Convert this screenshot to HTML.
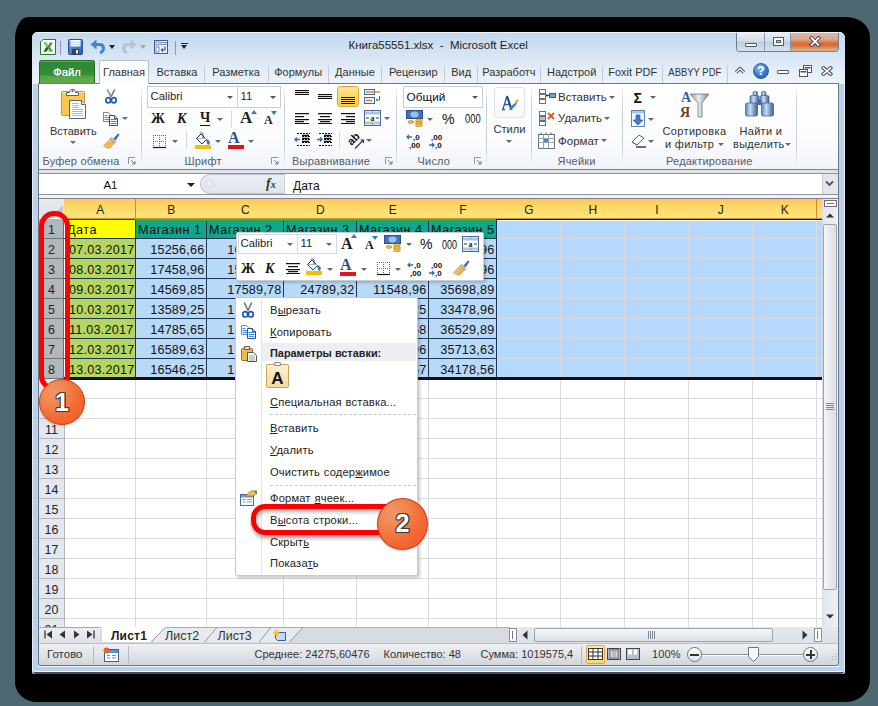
<!DOCTYPE html>
<html><head><meta charset="utf-8">
<style>
*{box-sizing:border-box;margin:0;padding:0}
html,body{width:878px;height:706px;overflow:hidden;background:#4d6870;font-family:"Liberation Sans",sans-serif;}
.a{position:absolute}
#shadow{left:15px;top:17px;width:855px;height:685px;background:#000;border-radius:13px 24px 24px 22px / 22px 20px 22px 20px}
#win{left:32px;top:32px;width:813px;height:642px;background:#b9d1ea;border-radius:6px 6px 3px 3px;overflow:hidden;box-shadow:inset 1px 0 0 #e4eef9, inset -1px 0 0 #e4eef9, inset 0 -2px 0 #4a4f55, inset 0 -3px 0 #f2f7fc}
#title{left:0;top:0;width:813px;height:52px;background:linear-gradient(#c3d8ee 0,#d6e4f3 22px,#e6eef8 40px,#edf3fa 52px)}
.t{position:absolute;white-space:pre;color:#222;font-size:11px;line-height:13px}
.tab{position:absolute;top:28px;height:23px;font-size:11px;color:#333;text-align:center;line-height:22px;border-right:1px solid #c5cdd8}
#ribbon{left:6px;top:51px;width:801px;height:85px;background:linear-gradient(#fdfeff 0,#f8fafd 50px,#eef2f8 85px);border:1px solid #b9c3cf;border-top:1px solid #b6bec8}
.gl{position:absolute;top:71px;font-size:11px;color:#515d6c;white-space:pre;line-height:13px;letter-spacing:0.2px}
.gsep{position:absolute;top:4px;width:1px;height:80px;background:linear-gradient(rgba(200,208,218,0),#c7cfd9 20%,#c7cfd9 80%,rgba(200,208,218,0))}
.arr{position:absolute;width:0;height:0;border-left:3px solid transparent;border-right:3px solid transparent;border-top:3px solid #555}
.cell{font-size:12.6px;line-height:15px;color:#111;overflow:hidden}
.mi{left:270px;font-size:11.2px;line-height:13px;color:#222;word-spacing:0.6px;letter-spacing:0.15px}
.mi u{text-decoration:underline;text-underline-offset:1px}
.ball{border-radius:50%;background:radial-gradient(circle at 30% 28%,#f09866 0,#f1864f 28%,#f36a34 58%,#f4561f 100%);border:1px solid #c23c16;box-shadow:0 1px 2px rgba(0,0,0,0.2)}
.num{text-align:center;font:bold 25px/25px 'Liberation Sans';color:#fff;text-shadow:1px 0 0 #3a3a3a,-1px 0 0 #3a3a3a,0 1px 0 #3a3a3a,0 -1px 0 #3a3a3a,1px 1px 0 #3a3a3a,-1px -1px 0 #3a3a3a,1px -1px 0 #3a3a3a,-1px 1px 0 #3a3a3a}
</style></head><body>
<div class="a" id="shadow"></div>
<div class="a" id="win">
  <div class="a" id="title"></div>
  <div class="a" style="left:0;top:0;width:813px;height:1px;background:#eef4fa"></div>
  <!-- QAT -->
  <svg class="a" style="left:8px;top:7px" width="16" height="16" viewBox="0 0 16 16">
    <path d="M3 0.5h12.5v15H0.5V3z" fill="#fff" stroke="#1f7a2a"/>
    <path d="M3 3h2.5l5 10H8z" fill="#d8dcd8"/>
    <path d="M3.5 3.5h3l1.7 3 1.7-3h3L10 8l3 4.5h-3L8.2 9.5 6.5 12.5h-3L6.5 8z" fill="#3c9c40"/>
    <path d="M3.5 3.5h3l1.7 3L6.8 8.5z" fill="#8ad070"/>
    <path d="M3.5 12.5L6.5 8l1.7 1.5-1.7 3z" fill="#1f6a28"/>
  </svg>
  <div class="a" style="left:28px;top:9px;width:1px;height:14px;background:#8e9aa8"></div>
  <svg class="a" style="left:36px;top:7px" width="15" height="16" viewBox="0 0 15 16">
    <defs><linearGradient id="sv" x1="0" y1="0" x2="1" y2="1"><stop offset="0" stop-color="#6fa0e0"/><stop offset="1" stop-color="#2a5cb0"/></linearGradient></defs>
    <rect x="0.5" y="0.5" width="14" height="15" rx="1" fill="url(#sv)" stroke="#284f96"/>
    <rect x="2.5" y="1" width="10" height="6.5" fill="#f4f7fb"/>
    <path d="M3 3.5h9M3 5.5h9" stroke="#c9d6e8"/>
    <rect x="4" y="10" width="7" height="5.5" fill="#39414c"/>
    <rect x="8" y="11" width="2" height="3.5" fill="#e8ecf0"/>
  </svg>
  <svg class="a" style="left:58px;top:7px" width="16" height="16" viewBox="0 0 16 16">
    <path d="M5 5.5h4.5c2.5 0 4 1.6 4 3.8 0 2.3-1.6 3.8-3.5 4.7" stroke="#3b86d8" stroke-width="3" fill="none"/>
    <path d="M0.5 5.5L6.5 0.5V10.5z" fill="#3b86d8"/>
  </svg>
  <div class="arr" style="left:77px;top:13px;border-top-color:#222;border-left-width:3.5px;border-right-width:3.5px;border-top-width:4px"></div>
  <svg class="a" style="left:89px;top:7px" width="16" height="16" viewBox="0 0 16 16">
    <path d="M11 5.5H6.5c-2.5 0-4 1.6-4 3.8 0 2.3 1.6 3.8 3.5 4.7" stroke="#bcc3cb" stroke-width="3" fill="none"/>
    <path d="M15.5 5.5L9.5 0.5V10.5z" fill="#bcc3cb"/>
  </svg>
  <div class="arr" style="left:108px;top:13px;border-top-color:#a0a8b2;border-left-width:3.5px;border-right-width:3.5px;border-top-width:4px"></div>
  <svg class="a" style="left:122px;top:8px" width="14" height="14" viewBox="0 0 14 14">
    <rect x="0.5" y="0.5" width="13" height="13" fill="#eef2f7" stroke="#41618c"/>
    <rect x="2" y="2" width="3" height="3" fill="#fff" stroke="#4a78b8" stroke-width="0.8"/>
    <rect x="7" y="2.5" width="5" height="2" fill="#fff" stroke="#4a78b8" stroke-width="0.8"/>
    <rect x="2" y="7" width="3" height="5" fill="#fff" stroke="#4a78b8" stroke-width="0.8"/>
    <path d="M11 6.5v3.5H7.5M9 8.5l-1.5 1.5L9 11.5" stroke="#2a5da8" fill="none" stroke-width="1.2"/>
  </svg>
  <div class="a" style="left:143px;top:9px;width:1px;height:14px;background:#8e9aa8"></div>
  <div class="a" style="left:149px;top:11px;width:7px;height:1px;background:#222"></div>
  <div class="arr" style="left:149px;top:13px;border-top-color:#222;border-left-width:3.5px;border-right-width:3.5px;border-top-width:4px"></div>
  <div class="t" style="left:316.5px;top:6.5px;font-size:11.5px;color:#1e1e1e">Книга55551.xlsx  -  Microsoft Excel</div>
  <!-- window buttons -->
  <div class="a" style="left:704px;top:1px;width:103px;height:19px;border:1px solid #6f7f92;border-top:none;border-radius:0 0 4px 4px;overflow:hidden">
    <div class="a" style="left:0;top:0;width:28px;height:18px;background:linear-gradient(#e7eef7,#d3deeb 45%,#bfcedf 50%,#d5e2ef);border-right:1px solid #8a99aa"></div>
    <div class="a" style="left:28px;top:0;width:26px;height:18px;background:linear-gradient(#e7eef7,#d3deeb 45%,#bfcedf 50%,#d5e2ef);border-right:1px solid #8a99aa"></div>
    <div class="a" style="left:54px;top:0;width:48px;height:18px;background:linear-gradient(#dcb8a0,#d6ab8e 35%,#d68f62 45%,#e0632e 60%,#dc7a44 75%,#d4a486 90%,#d8ac90)"></div>
    <div class="a" style="left:8px;top:10px;width:12px;height:4px;background:#fff;border:1px solid #4a5a6e;border-radius:1px"></div>
    <div class="a" style="left:36px;top:4px;width:11px;height:9px;background:transparent;border:1px solid #4a5a6e;box-shadow:inset 0 0 0 2px #fff, inset 0 0 0 3px #4a5a6e"></div>
    <svg class="a" style="left:72px;top:3px" width="12" height="11" viewBox="0 0 12 11"><path d="M2.5 2l7 7M9.5 2l-7 7" stroke="#3a3a4a" stroke-width="3.6" stroke-linecap="square"/><path d="M2.5 2l7 7M9.5 2l-7 7" stroke="#fff" stroke-width="1.8" stroke-linecap="square"/></svg>
  </div>
  <!-- tabs -->
  <div class="a" style="left:7px;top:28px;width:56px;height:23px;background:linear-gradient(#2f8834 0,#2f8a35 40%,#34903a 62%,#5aa448 72%,#62aa4e 100%);border:1px solid #236d27;border-bottom:none;border-radius:3px 3px 0 0;box-shadow:inset 0 1px 0 #5cae50"></div>
  <div class="t" style="left:7px;top:33.5px;width:56px;text-align:center;color:#fff;font-size:11.2px;font-weight:normal;text-shadow:0 0 0.4px #fff">Файл</div>
  <div class="a" style="left:67px;top:28px;width:50px;height:24px;background:linear-gradient(#fff,#fbfcfe);border:1px solid #b6bec8;border-bottom:none;border-radius:2px 2px 0 0;z-index:2"></div>
  <div class="t" style="left:67px;top:34px;width:50px;text-align:center;color:#333;z-index:3">Главная</div>
  <div class="t" style="left:118.4px;top:34px;width:53.2px;text-align:center;color:#333;overflow:hidden">Вставка</div>
  <div class="a" style="left:172px;top:31px;width:1px;height:20px;background:linear-gradient(rgba(190,198,210,0),#c3cad4 30%)"></div>
  <div class="t" style="left:172.6px;top:34px;width:62.9px;text-align:center;color:#333;overflow:hidden">Разметка</div>
  <div class="a" style="left:236px;top:31px;width:1px;height:20px;background:linear-gradient(rgba(190,198,210,0),#c3cad4 30%)"></div>
  <div class="t" style="left:236.5px;top:34px;width:59.3px;text-align:center;color:#333;overflow:hidden">Формулы</div>
  <div class="a" style="left:296px;top:31px;width:1px;height:20px;background:linear-gradient(rgba(190,198,210,0),#c3cad4 30%)"></div>
  <div class="t" style="left:296.8px;top:34px;width:52.3px;text-align:center;color:#333;overflow:hidden">Данные</div>
  <div class="a" style="left:349px;top:31px;width:1px;height:20px;background:linear-gradient(rgba(190,198,210,0),#c3cad4 30%)"></div>
  <div class="t" style="left:350.1px;top:34px;width:62.4px;text-align:center;color:#333;overflow:hidden">Рецензир</div>
  <div class="a" style="left:412px;top:31px;width:1px;height:20px;background:linear-gradient(rgba(190,198,210,0),#c3cad4 30%)"></div>
  <div class="t" style="left:413.5px;top:34px;width:31.3px;text-align:center;color:#333;overflow:hidden">Вид</div>
  <div class="a" style="left:445px;top:31px;width:1px;height:20px;background:linear-gradient(rgba(190,198,210,0),#c3cad4 30%)"></div>
  <div class="t" style="left:445.8px;top:34px;width:62.3px;text-align:center;color:#333;overflow:hidden">Разработч</div>
  <div class="a" style="left:508px;top:31px;width:1px;height:20px;background:linear-gradient(rgba(190,198,210,0),#c3cad4 30%)"></div>
  <div class="t" style="left:509.1px;top:34px;width:61.1px;text-align:center;color:#333;overflow:hidden">Надстрой</div>
  <div class="a" style="left:570px;top:31px;width:1px;height:20px;background:linear-gradient(rgba(190,198,210,0),#c3cad4 30%)"></div>
  <div class="t" style="left:571.2px;top:34px;width:59.0px;text-align:center;color:#333;overflow:hidden">Foxit PDF</div>
  <div class="a" style="left:630px;top:31px;width:1px;height:20px;background:linear-gradient(rgba(190,198,210,0),#c3cad4 30%)"></div>
  <div class="t" style="left:631.2px;top:34px;width:63.6px;text-align:center;color:#333;overflow:hidden;transform:scaleX(0.86)">ABBYY PDF</div>
  <div class="a" style="left:695px;top:31px;width:1px;height:20px;background:linear-gradient(rgba(190,198,210,0),#c3cad4 30%)"></div>
  <!-- ribbon right icons -->
  <svg class="a" style="left:702px;top:34px" width="12" height="9" viewBox="0 0 12 9"><path d="M2 6.5L6 2.5l4 4" stroke="#555" stroke-width="3.2" fill="none" stroke-linejoin="round"/><path d="M2 6.5L6 2.5l4 4" stroke="#fff" stroke-width="1.2" fill="none"/></svg>
  <div class="a" style="left:721px;top:31px;width:16px;height:16px;border-radius:50%;background:radial-gradient(circle at 40% 30%,#8fc0f4,#2f74c9 60%,#1f5aa8);border:1px solid #2a5c9c"></div>
  <div class="t" style="left:721px;top:32px;width:16px;text-align:center;color:#fff;font-weight:bold;font-size:12px;line-height:14px">?</div>
  <div class="a" style="left:745px;top:38px;width:12px;height:4px;border:1px solid #555;border-radius:1px;background:#fff"></div>
  <svg class="a" style="left:767px;top:33px" width="13" height="12" viewBox="0 0 13 12"><rect x="4.5" y="0.5" width="8" height="7" fill="#fff" stroke="#555"/><rect x="5.5" y="2" width="6" height="1.5" fill="#555"/><rect x="0.5" y="4.5" width="8" height="7" fill="#fff" stroke="#555"/><rect x="1.5" y="6" width="6" height="1.5" fill="#555"/></svg>
  <svg class="a" style="left:789px;top:34px" width="12" height="10" viewBox="0 0 12 10"><path d="M2.5 2l7 6M9.5 2l-7 6" stroke="#555" stroke-width="3.8" stroke-linecap="square"/><path d="M2.5 2l7 6M9.5 2l-7 6" stroke="#fff" stroke-width="1.6" stroke-linecap="square"/></svg>
</div>
<div class="a" id="pg" style="left:0;top:0;width:878px;height:706px">
  <!-- ribbon body -->
  <div class="a" style="left:38px;top:83px;width:801px;height:87px;background:linear-gradient(#ffffff 0,#fbfcfe 55px,#eff3f8 86px);border:1px solid #737b86;border-top-color:#8a929c;border-bottom-color:#7d858f"></div>
  <div class="a" style="left:100px;top:83px;width:47px;height:1px;background:#fff"></div>
  <div class="a" style="left:38px;top:170px;width:801px;height:3px;background:#dfe3e8;border-left:1px solid #737b86;border-right:1px solid #737b86"></div>
  <!-- group separators -->
  <div class="gsep" style="left:141px;top:86px"></div>
  <div class="gsep" style="left:284px;top:86px"></div>
  <div class="gsep" style="left:396px;top:86px"></div>
  <div class="gsep" style="left:486px;top:86px"></div>
  <div class="gsep" style="left:531px;top:86px"></div>
  <div class="gsep" style="left:622px;top:86px"></div>
  <div class="gsep" style="left:796px;top:86px"></div>
  <!-- group labels -->
  <div class="gl" style="left:42.5px;top:154.9px">Буфер обмена</div>
  <div class="gl" style="left:184.5px;top:154.9px">Шрифт</div>
  <div class="gl" style="left:292px;top:154.9px">Выравнивание</div>
  <div class="gl" style="left:417.5px;top:154.9px">Число</div>
  <div class="gl" style="left:557.5px;top:154.9px">Ячейки</div>
  <div class="gl" style="left:666px;top:154.9px">Редактирование</div>
  <!-- launchers -->
  <svg class="a" style="left:128px;top:157px" width="8" height="8" viewBox="0 0 8 8"><path d="M0.5 7V0.5H7" stroke="#8a96a4" fill="none"/><path d="M3 3l4 4M7 4v3H4" stroke="#6e7a88" fill="none"/></svg>
  <svg class="a" style="left:271px;top:157px" width="8" height="8" viewBox="0 0 8 8"><path d="M0.5 7V0.5H7" stroke="#8a96a4" fill="none"/><path d="M3 3l4 4M7 4v3H4" stroke="#6e7a88" fill="none"/></svg>
  <svg class="a" style="left:385px;top:157px" width="8" height="8" viewBox="0 0 8 8"><path d="M0.5 7V0.5H7" stroke="#8a96a4" fill="none"/><path d="M3 3l4 4M7 4v3H4" stroke="#6e7a88" fill="none"/></svg>
  <svg class="a" style="left:474px;top:157px" width="8" height="8" viewBox="0 0 8 8"><path d="M0.5 7V0.5H7" stroke="#8a96a4" fill="none"/><path d="M3 3l4 4M7 4v3H4" stroke="#6e7a88" fill="none"/></svg>

  <!-- Clipboard -->
  <svg class="a" style="left:60px;top:88px" width="29" height="32" viewBox="0 0 29 32">
    <rect x="1.5" y="3.5" width="23" height="24" rx="1" fill="#fbc84c" stroke="#c8925a"/>
    <path d="M2.5 4.5h21" stroke="#ffe9a8"/>
    <path d="M6.5 7.5V4.5h3c0-2 1.2-3 2.5-3h1c1.3 0 2.5 1 2.5 3h3v3z" fill="#fff" stroke="#5a626c"/>
    <circle cx="12.5" cy="3.2" r="0.9" fill="#8a2a3a"/>
    <path d="M9.5 12.5h12l4 4v14h-16z" fill="#fff" stroke="#5c6570"/>
    <path d="M21.5 12.5v4h4" fill="#e6eaee" stroke="#5c6570"/>
    <path d="M12 15.5h7M12 17.5h7M12 19.5h7M12 21.5h11M12 23.5h11M12 25.5h11M12 27.5h11" stroke="#b4bac2"/>
  </svg>
  <div class="t" style="left:50px;top:125.3px;color:#333">Вставить</div>
  <div class="arr" style="left:70px;top:141px;border-top-color:#6a6a6a"></div>
  <svg class="a" style="left:105px;top:89px" width="12" height="15" viewBox="0 0 12 15">
    <path d="M2.3 0.5L6.2 8.2M9.7 0.5L5.8 8.2" stroke="#6b7480" stroke-width="1.6"/>
    <path d="M2.3 0.5L6 7.5" stroke="#b9c0c8" stroke-width="0.6"/>
    <ellipse cx="3.2" cy="11.3" rx="2.4" ry="2.6" fill="#fff" stroke="#2257b8" stroke-width="1.7"/>
    <ellipse cx="8.8" cy="11.3" rx="2.4" ry="2.6" fill="#fff" stroke="#2257b8" stroke-width="1.7"/>
  </svg>
  <svg class="a" style="left:103px;top:112px" width="16" height="14" viewBox="0 0 16 14">
    <path d="M0.5 0.5h5l2 2v7h-7z" fill="#fff" stroke="#7d8a9c"/>
    <path d="M1.5 3.5h3M1.5 5.5h4.5M1.5 7.5h4.5" stroke="#3d8fe0"/>
    <path d="M6.5 3.5h5l3 3v7h-8z" fill="#fff" stroke="#2b4f9a"/>
    <path d="M11.5 3.5v3h3" fill="#dce8f8" stroke="#2b4f9a"/>
    <path d="M7.5 7.5h6M7.5 9.5h6M7.5 11.5h6" stroke="#3d8fe0"/>
  </svg>
  <div class="arr" style="left:122px;top:117px;border-top-color:#6a6a6a"></div>
  <svg class="a" style="left:102px;top:133px" width="18" height="16" viewBox="0 0 18 16">
    <path d="M12 5.5l3.8-4.3c.6-.6 1.6.2 1.1.9L13.4 7z" fill="#3a6fc0" stroke="#1f4a8a" stroke-width="0.6"/>
    <path d="M9.5 4.5l4.5 4-1.5 1.5-4.5-4z" fill="#c9ced6" stroke="#6b737e" stroke-width="0.6"/>
    <path d="M8 6l4.5 4-4 4.5c-1.8 1-4.5.6-7-1.8z" fill="#f4cf7c" stroke="#a87a2c" stroke-width="0.6"/>
    <path d="M4 12.5l5.5-4.3M6 14l5-4.5" stroke="#e8a43c" stroke-width="1.2"/>
  </svg>

  <!-- Font group -->
  <div class="a" style="left:147px;top:86px;width:91px;height:22px;background:#fff;border:1px solid #c5ced9"></div>
  <div class="a" style="left:237px;top:86px;width:44px;height:22px;background:#fff;border:1px solid #c5ced9"></div>
  <div class="t" style="left:150.5px;top:90.2px;color:#1e1e1e;font-size:11.3px">Calibri</div>
  <div class="t" style="left:240.5px;top:90.2px;color:#1e1e1e;font-size:11.3px">11</div>
  <div class="arr" style="left:227px;top:96px;border-top-color:#555"></div>
  <div class="arr" style="left:270px;top:96px;border-top-color:#555"></div>
  <div class="t" style="left:151px;top:111px;font:bold 14px/16px 'Liberation Serif';color:#1a1a1a">Ж</div>
  <div class="t" style="left:177px;top:111px;font:bold italic 14px/16px 'Liberation Serif';color:#1a1a1a">К</div>
  <div class="t" style="left:200px;top:110px;font:bold 14px/16px 'Liberation Serif';color:#1a1a1a">Ч</div>
  <div class="a" style="left:200px;top:125px;width:10px;height:1px;background:#1a1a1a"></div>
  <div class="arr" style="left:217px;top:118px;border-top-color:#666"></div>
  <div class="a" style="left:231px;top:110px;width:1px;height:18px;background:#d4dae2"></div>
  <div class="t" style="left:240px;top:109px;font:bold 17px/18px 'Liberation Serif';color:#222">A</div>
  <svg class="a" style="left:251px;top:110px" width="6" height="4"><path d="M0 4L3 0 6 4z" fill="#3a74c8"/></svg>
  <div class="t" style="left:264px;top:114px;font:bold 12px/13px 'Liberation Serif';color:#222">A</div>
  <svg class="a" style="left:271px;top:111px" width="6" height="4"><path d="M0 0L3 4 6 0z" fill="#3a74c8"/></svg>
  <svg class="a" style="left:152px;top:134px" width="15" height="15" viewBox="0 0 15 15">
    <path d="M1.5 1v12M7.5 1v12M13.5 1v12M1 1.5h13M1 7.5h13" stroke="#666" stroke-dasharray="1 1" fill="none"/>
    <path d="M1 13.5h13" stroke="#111" stroke-width="1.2"/>
  </svg>
  <div class="arr" style="left:172px;top:140px;border-top-color:#666"></div>
  <div class="a" style="left:186px;top:131px;width:1px;height:18px;background:#d4dae2"></div>
  <svg class="a" style="left:194px;top:132px" width="18" height="17" viewBox="0 0 18 17">
    <path d="M2.5 6.5L7 2l5.5 5.5L8 12z" fill="#fff" stroke="#2a3340" stroke-width="1"/>
    <path d="M3 6.5h9" stroke="#9fb8d8" stroke-width="1"/>
    <path d="M6 1.5c1-1.5 3-1 3 1.5v3" stroke="#2a3340" fill="none" stroke-width="0.9"/>
    <path d="M12.5 7.5c1.8.3 3 1.5 3 3.5 0 1-.6 1.5-1.2 1.5-.7 0-1.1-.6-1.1-1.5z" fill="#3a7ad0" stroke="#24509a" stroke-width="0.5"/>
    <rect x="1" y="13" width="16" height="4" fill="#f0c000"/>
  </svg>
  <div class="arr" style="left:215px;top:140px;border-top-color:#666"></div>
  <div class="t" style="left:228px;top:130px;font:bold 16px/16px 'Liberation Serif';color:#2a4e8a">A</div>
  <div class="a" style="left:228px;top:145px;width:16px;height:4px;background:#e8111a"></div>
  <div class="arr" style="left:248px;top:140px;border-top-color:#666"></div>
  <!-- Alignment -->
  <svg class="a" style="left:294px;top:89px" width="16" height="8" viewBox="0 0 16 8"><path d="M1 1.5h14M1 3.5h14M1 5.5h14" stroke="#111"/><path d="M1 2.5h14M1 4.5h14" stroke="#d8dadd"/></svg>
  <svg class="a" style="left:317px;top:93px" width="16" height="8" viewBox="0 0 16 8"><path d="M1 1.5h14M1 3.5h14M1 5.5h14" stroke="#111"/><path d="M1 2.5h14M1 4.5h14" stroke="#d8dadd"/></svg>
  <div class="a" style="left:337px;top:86px;width:22px;height:21px;border:1px solid #e5a33b;border-radius:3px;background:linear-gradient(#fde89a,#fbd96a 50%,#f9cf55)"></div>
  <svg class="a" style="left:340px;top:96px" width="16" height="9" viewBox="0 0 16 9"><path d="M1 1.5h14M1 3.5h14M1 5.5h14M1 7.5h14" stroke="#111"/></svg>
  <svg class="a" style="left:364px;top:89px" width="18" height="16" viewBox="0 0 18 16">
    <rect x="0.5" y="0.5" width="10" height="5" fill="#e8eef6" stroke="#4d6a94"/>
    <path d="M2 3h14" stroke="#c07a2a" stroke-width="1.2"/>
    <rect x="0.5" y="8.5" width="10" height="6" fill="#e8eef6" stroke="#4d6a94"/>
    <path d="M2 11.5h6" stroke="#c07a2a" stroke-width="1.2"/>
    <path d="M15.5 7v4h-3M13 9.5l-1 1.5 1.5.5" stroke="#4d6a94" fill="none"/>
  </svg>
  <svg class="a" style="left:294px;top:112px" width="16" height="13" viewBox="0 0 16 13"><path d="M1 1.5h14M1 7.5h14M1 11.5h14" stroke="#111"/><path d="M1 4.5h9M1 9.5h9" stroke="#111"/><path d="M1 2.5h14M1 5.5h9M1 8.5h14M1 10.5h9" stroke="#c8cacd"/></svg>
  <svg class="a" style="left:317px;top:112px" width="16" height="13" viewBox="0 0 16 13"><path d="M1 1.5h14M1 7.5h14M1 11.5h14" stroke="#111"/><path d="M3 4.5h10M3 9.5h10" stroke="#111"/><path d="M1 2.5h14M3 5.5h10M1 8.5h14M3 10.5h10" stroke="#c8cacd"/></svg>
  <svg class="a" style="left:340px;top:112px" width="16" height="13" viewBox="0 0 16 13"><path d="M1 1.5h14M1 7.5h14M1 11.5h14" stroke="#111"/><path d="M6 4.5h9M6 9.5h9" stroke="#111"/><path d="M1 2.5h14M6 5.5h9M1 8.5h14M6 10.5h9" stroke="#c8cacd"/></svg>
  <svg class="a" style="left:364px;top:110px" width="18" height="17" viewBox="0 0 18 17">
    <rect x="0.5" y="0.5" width="16" height="15" fill="#d7e4f4" stroke="#4d6a94"/>
    <rect x="1" y="5" width="15" height="6" fill="#fff"/>
    <path d="M1 3h15M1 13h15M8.5 1v3M8.5 12v3" stroke="#8aa6cc"/>
    <text x="8.5" y="10.5" font-family="Liberation Serif" font-weight="bold" font-size="8" text-anchor="middle" fill="#222">a</text>
    <path d="M2 8h3M12 8h3" stroke="#333"/>
  </svg>
  <div class="arr" style="left:384px;top:117px;border-top-color:#666"></div>
  <svg class="a" style="left:293px;top:132px" width="18" height="15" viewBox="0 0 18 15"><path d="M4 1.5h13M9 4.5h8M9 7.5h8M9 10.5h8M4 13.5h13" stroke="#111" stroke-dasharray="2 1"/><path d="M9 3.5h7M9 6.5h7M9 9.5h7" stroke="#111" stroke-width="1.5"/><path d="M7 7.5H2M4 5.5L2 7.5l2 2" stroke="#2f6cc0" stroke-width="1.5" fill="none"/></svg>
  <svg class="a" style="left:315px;top:132px" width="18" height="15" viewBox="0 0 18 15"><path d="M4 1.5h13M9 4.5h8M9 7.5h8M9 10.5h8M4 13.5h13" stroke="#111" stroke-dasharray="2 1"/><path d="M9 3.5h7M9 6.5h7M9 9.5h7" stroke="#111" stroke-width="1.5"/><path d="M2 7.5h5M5 5.5l2 2-2 2" stroke="#2f6cc0" stroke-width="1.5" fill="none"/></svg>
  <div class="a" style="left:339px;top:131px;width:1px;height:18px;background:#d4dae2"></div>
  <svg class="a" style="left:348px;top:131px" width="18" height="18" viewBox="0 0 18 18">
    <text x="3.5" y="15" font-family="Liberation Sans" font-weight="bold" font-size="11" fill="#111" transform="rotate(-45 3.5 15)">ab</text>
    <path d="M7 17.5L15.5 9M12.5 9h3v3" stroke="#333" fill="none" stroke-width="1.1"/>
  </svg>
  <div class="arr" style="left:366px;top:139px;border-top-color:#666"></div>

  <!-- Number -->
  <div class="a" style="left:403px;top:86px;width:80px;height:22px;background:#fff;border:1px solid #c5ced9"></div>
  <div class="t" style="left:406.5px;top:90px;color:#111;font-size:11.8px;line-height:14px">Общий</div>
  <div class="arr" style="left:472px;top:96px;border-top-color:#555"></div>
  <svg class="a" style="left:406px;top:110px" width="18" height="17" viewBox="0 0 18 17">
    <rect x="0.5" y="0.5" width="16" height="8" fill="#3f73bf" stroke="#2b4f8a"/>
    <ellipse cx="8.5" cy="4.5" rx="4" ry="3" fill="#9cc0ea"/>
    <ellipse cx="13" cy="10.5" rx="3.5" ry="1.6" fill="#f2c14a" stroke="#b07a1a" stroke-width="0.6"/>
    <ellipse cx="13" cy="13" rx="3.5" ry="1.6" fill="#f2c14a" stroke="#b07a1a" stroke-width="0.6"/>
    <ellipse cx="13" cy="15.3" rx="3.5" ry="1.5" fill="#f2c14a" stroke="#b07a1a" stroke-width="0.6"/>
    <ellipse cx="5" cy="12" rx="3" ry="1.4" fill="#f2c14a" stroke="#b07a1a" stroke-width="0.6"/>
  </svg>
  <div class="arr" style="left:427px;top:118px;border-top-color:#666"></div>
  <div class="t" style="left:442px;top:112px;font-size:14px;line-height:15px;color:#111">%</div>
  <div class="t" style="left:464.5px;top:112px;font-size:13px;line-height:14px;color:#111;transform:scaleX(0.72);transform-origin:left">000</div>
  <svg class="a" style="left:406px;top:132px" width="18" height="18" viewBox="0 0 18 18">
    <path d="M1 5h5M3 3L1 5l2 2" stroke="#2f6cc0" stroke-width="1.3" fill="none"/>
    <text x="7" y="8" font-family="Liberation Sans" font-weight="bold" font-size="8" fill="#111">,0</text>
    <text x="3" y="16" font-family="Liberation Sans" font-weight="bold" font-size="8" fill="#111">,00</text>
  </svg>
  <svg class="a" style="left:428px;top:132px" width="18" height="18" viewBox="0 0 18 18">
    <text x="3" y="8" font-family="Liberation Sans" font-weight="bold" font-size="8" fill="#111">,00</text>
    <path d="M1 13h5M4 11l2 2-2 2" stroke="#2f6cc0" stroke-width="1.3" fill="none"/>
    <text x="7" y="16" font-family="Liberation Sans" font-weight="bold" font-size="8" fill="#111">,0</text>
  </svg>

  <!-- Styles -->
  <div class="a" style="left:494px;top:87px;width:31px;height:31px;border:1px solid #dde2e8;border-radius:3px;background:linear-gradient(#fff,#f6f8fb)"></div>
  <svg class="a" style="left:501px;top:94px" width="18" height="17" viewBox="0 0 18 17">
    <path d="M1 15.5h3M6 2L1.8 15.5M6 2l4.5 13.5M3.2 10.5h6" stroke="#2a5aa8" stroke-width="1.3" fill="none"/>
    <path d="M6 2l4.5 13.5" stroke="#1e4a90" stroke-width="2"/>
    <path d="M8.5 15.5c1-3 4-5.5 7-6.5-1 3-4 6-7 6.5z" fill="#4f8ad8" stroke="#2a5aa8" stroke-width="0.6"/>
    <path d="M14.5 8.5l2.5-2.5" stroke="#e0a020" stroke-width="2"/>
  </svg>
  <div class="t" style="left:493.5px;top:122.8px;color:#333;font-size:11.1px">Стили</div>
  <div class="arr" style="left:506px;top:140px;border-top-color:#666"></div>

  <!-- Cells -->
  <svg class="a" style="left:538px;top:89px" width="18" height="15" viewBox="0 0 18 15">
    <rect x="1.5" y="0.5" width="6" height="4" fill="#fff" stroke="#6a7480"/><rect x="1.5" y="5.5" width="6" height="4" fill="#fff" stroke="#6a7480"/><rect x="1.5" y="10.5" width="6" height="4" fill="#fff" stroke="#6a7480"/>
    <rect x="11.5" y="4.5" width="6" height="4" fill="#6fa3e0" stroke="#2f5c9c"/>
    <path d="M8 6.5h3M9.5 5.2L8 6.5l1.5 1.3" stroke="#333" fill="none"/>
  </svg>
  <div class="t" style="left:558px;top:91px;color:#333;font-size:11.5px">Вставить</div>
  <div class="arr" style="left:609px;top:96px;border-top-color:#666"></div>
  <svg class="a" style="left:538px;top:111px" width="18" height="15" viewBox="0 0 18 15">
    <rect x="1.5" y="0.5" width="6" height="4" fill="#fff" stroke="#6a7480"/><rect x="1.5" y="5.5" width="6" height="4" fill="#9cc4f0" stroke="#6a7480"/><rect x="1.5" y="10.5" width="6" height="4" fill="#fff" stroke="#6a7480"/>
    <path d="M10 2l6 6M16 2l-6 6" stroke="#e8561a" stroke-width="1.8"/>
  </svg>
  <div class="t" style="left:558px;top:111.8px;color:#333;font-size:11.5px">Удалить</div>
  <div class="arr" style="left:604px;top:117px;border-top-color:#666"></div>
  <svg class="a" style="left:538px;top:132px" width="18" height="17" viewBox="0 0 18 17">
    <rect x="0.5" y="2.5" width="16" height="14" fill="#fff" stroke="#6a7480"/>
    <path d="M0.5 6.5h16M0.5 10.5h16M5.5 2.5v14M10.5 2.5v14" stroke="#9aa2ac"/>
    <rect x="6" y="7" width="4" height="3" fill="#3f86d8"/>
    <path d="M3 0.5v2M8 0.5v2M13 0.5v2" stroke="#555"/>
  </svg>
  <div class="t" style="left:558px;top:134.8px;color:#333;font-size:11.5px">Формат</div>
  <div class="arr" style="left:601px;top:139px;border-top-color:#666"></div>

  <!-- Editing -->
  <div class="t" style="left:633.5px;top:89.5px;font:bold 14px/16px 'Liberation Sans';color:#111">Σ</div>
  <div class="arr" style="left:650px;top:96px;border-top-color:#666"></div>
  <svg class="a" style="left:631px;top:110px" width="15" height="17" viewBox="0 0 15 17"><rect x="0.5" y="0.5" width="13" height="16" fill="#f2f6fb" stroke="#5a86c0"/><rect x="1" y="1" width="12" height="2.5" fill="#a9c8ec"/><path d="M5 5h4v5h3l-5 5-5-5h3z" fill="#3a7fd6" stroke="#1f4f9a" stroke-width="0.6"/></svg>
  <div class="arr" style="left:648px;top:118px;border-top-color:#666"></div>
  <svg class="a" style="left:631px;top:134px" width="16" height="14" viewBox="0 0 16 14"><path d="M1 8l7-7 5 3-7 7z" fill="#fff" stroke="#666"/><path d="M1 8l5 3" stroke="#666"/><path d="M5 13h10" stroke="#111" stroke-width="1.2"/></svg>
  <div class="arr" style="left:648px;top:140px;border-top-color:#666"></div>
  <svg class="a" style="left:680px;top:89px" width="30" height="30" viewBox="0 0 30 30">
    <defs><linearGradient id="fun" x1="0" x2="1"><stop offset="0" stop-color="#8e969e"/><stop offset="0.45" stop-color="#e8ecef"/><stop offset="1" stop-color="#7e8790"/></linearGradient></defs>
    <text x="1" y="13" font-family="Liberation Serif" font-weight="bold" font-size="14" fill="#2f62b0">A</text>
    <text x="0" y="28" font-family="Liberation Serif" font-weight="bold" font-size="14" fill="#7a3a2a">Я</text>
    <path d="M10 5h19l-7 9v14h-4V14z" fill="url(#fun)" stroke="#6f7880" stroke-width="0.8"/>
  </svg>
  <div class="t" style="left:662.5px;top:124.5px;color:#333;letter-spacing:0.35px">Сортировка</div>
  <div class="t" style="left:665px;top:137.5px;color:#333;letter-spacing:0.3px">и фильтр</div>
  <div class="arr" style="left:718px;top:143px;border-top-color:#666"></div>
  <svg class="a" style="left:745px;top:91px" width="29" height="26" viewBox="0 0 29 26">
    <defs><linearGradient id="bin" x1="0" x2="1"><stop offset="0" stop-color="#5a82bc"/><stop offset="0.4" stop-color="#c8dcf4"/><stop offset="1" stop-color="#36609c"/></linearGradient></defs>
    <rect x="8" y="0.5" width="4.5" height="4" rx="1.5" fill="url(#bin)" stroke="#3a5a88" stroke-width="0.7"/>
    <rect x="16.5" y="0.5" width="4.5" height="4" rx="1.5" fill="url(#bin)" stroke="#3a5a88" stroke-width="0.7"/>
    <rect x="5" y="4.5" width="9" height="8" rx="1.5" fill="url(#bin)" stroke="#3a5a88" stroke-width="0.7"/>
    <rect x="15" y="4.5" width="9" height="8" rx="1.5" fill="url(#bin)" stroke="#3a5a88" stroke-width="0.7"/>
    <rect x="0.5" y="12" width="12" height="13" rx="1.5" fill="url(#bin)" stroke="#3a5a88" stroke-width="0.7"/>
    <rect x="16.5" y="12" width="12" height="13" rx="1.5" fill="url(#bin)" stroke="#3a5a88" stroke-width="0.7"/>
    <rect x="12.5" y="9" width="4" height="5" fill="#4a6a98"/>
  </svg>
  <div class="t" style="left:739.5px;top:124.5px;color:#333;letter-spacing:0.3px">Найти и</div>
  <div class="t" style="left:733px;top:137.5px;color:#333;letter-spacing:0.3px">выделить</div>
  <div class="arr" style="left:785px;top:143px;border-top-color:#666"></div>
<!--GRID START-->
<div class="a" style="left:38px;top:170px;width:801px;height:3px;background:#dfe3e8;border-left:1px solid #737b86;border-right:1px solid #737b86"></div>
<div class="a" style="left:38px;top:173px;width:801px;height:26px;background:#eef3f9;border-left:1px solid #737b86;border-right:1px solid #737b86"></div>
<div class="a" style="left:39px;top:173px;width:799px;height:22px;background:#fff;border-top:1px solid #8e969f;border-bottom:1px solid #8e969f"></div>
<div class="t" style="left:39px;top:178.5px;width:143px;text-align:center;color:#111;font-size:11.5px">A1</div>
<div class="arr" style="left:187px;top:183px;border-top-color:#222;border-left-width:4px;border-right-width:4px;border-top-width:4px"></div>
<div class="a" style="left:200px;top:174px;width:85px;height:20px;background:linear-gradient(#e9eef4,#dfe5ec);border:1px solid #b9c2cd;border-right:1px solid #c9d0d8;border-radius:10px 0 0 10px"></div>
<div class="a" style="left:205px;top:179px;width:9px;height:9px;border-radius:50%;background:radial-gradient(#f4f6f8,#c9d0d8)"></div>
<div class="t" style="left:266px;top:176px;font:bold italic 14px/16px 'Liberation Serif';color:#333">f<span style="font-size:10px">x</span></div>
<div class="t" style="left:293px;top:179px;color:#111;font-size:12px;line-height:14px">Дата</div>
<div class="a" style="left:822px;top:174px;width:16px;height:20px;background:#e3e6ea;border-left:1px solid #c6ccd3"></div>
<svg class="a" style="left:825px;top:180px" width="9" height="7" viewBox="0 0 9 7"><path d="M1 1.5l3.5 3.5 3.5-3.5" stroke="#555" stroke-width="1.8" fill="none"/></svg>
<div class="a" style="left:38px;top:198px;width:801px;height:1px;background:#8c7f8c"></div>
<div class="a" style="left:39px;top:199px;width:783px;height:428px;background:#fff;overflow:hidden">
<div class="a" style="left:457px;top:20px;width:326px;height:160px;background:#b4d9fc;"></div>
<div class="a" style="left:25px;top:39px;width:758px;height:1px;background:#d4d8dc;"></div>
<div class="a" style="left:25px;top:59px;width:758px;height:1px;background:#d4d8dc;"></div>
<div class="a" style="left:25px;top:79px;width:758px;height:1px;background:#d4d8dc;"></div>
<div class="a" style="left:25px;top:99px;width:758px;height:1px;background:#d4d8dc;"></div>
<div class="a" style="left:25px;top:119px;width:758px;height:1px;background:#d4d8dc;"></div>
<div class="a" style="left:25px;top:139px;width:758px;height:1px;background:#d4d8dc;"></div>
<div class="a" style="left:25px;top:159px;width:758px;height:1px;background:#d4d8dc;"></div>
<div class="a" style="left:25px;top:179px;width:758px;height:1px;background:#d4d8dc;"></div>
<div class="a" style="left:25px;top:199px;width:758px;height:1px;background:#dadcdf;"></div>
<div class="a" style="left:25px;top:219px;width:758px;height:1px;background:#dadcdf;"></div>
<div class="a" style="left:25px;top:239px;width:758px;height:1px;background:#dadcdf;"></div>
<div class="a" style="left:25px;top:259px;width:758px;height:1px;background:#dadcdf;"></div>
<div class="a" style="left:25px;top:279px;width:758px;height:1px;background:#dadcdf;"></div>
<div class="a" style="left:25px;top:299px;width:758px;height:1px;background:#dadcdf;"></div>
<div class="a" style="left:25px;top:319px;width:758px;height:1px;background:#dadcdf;"></div>
<div class="a" style="left:25px;top:339px;width:758px;height:1px;background:#dadcdf;"></div>
<div class="a" style="left:25px;top:359px;width:758px;height:1px;background:#dadcdf;"></div>
<div class="a" style="left:25px;top:379px;width:758px;height:1px;background:#dadcdf;"></div>
<div class="a" style="left:25px;top:399px;width:758px;height:1px;background:#dadcdf;"></div>
<div class="a" style="left:25px;top:419px;width:758px;height:1px;background:#dadcdf;"></div>
<div class="a" style="left:25px;top:439px;width:758px;height:1px;background:#dadcdf;"></div>
<div class="a" style="left:96px;top:20px;width:1px;height:420px;background:#dadcdf;"></div>
<div class="a" style="left:167px;top:20px;width:1px;height:420px;background:#dadcdf;"></div>
<div class="a" style="left:244px;top:20px;width:1px;height:420px;background:#dadcdf;"></div>
<div class="a" style="left:317px;top:20px;width:1px;height:420px;background:#dadcdf;"></div>
<div class="a" style="left:389px;top:20px;width:1px;height:420px;background:#dadcdf;"></div>
<div class="a" style="left:457px;top:20px;width:1px;height:420px;background:#dadcdf;"></div>
<div class="a" style="left:521px;top:20px;width:1px;height:420px;background:#dadcdf;"></div>
<div class="a" style="left:585px;top:20px;width:1px;height:420px;background:#dadcdf;"></div>
<div class="a" style="left:649px;top:20px;width:1px;height:420px;background:#dadcdf;"></div>
<div class="a" style="left:713px;top:20px;width:1px;height:420px;background:#dadcdf;"></div>
<div class="a" style="left:777px;top:20px;width:1px;height:420px;background:#dadcdf;"></div>
<div class="a" style="left:26px;top:21px;width:70px;height:18px;background:#ffff00;"></div>
<div class="a" style="left:97px;top:21px;width:70px;height:18px;background:#13a68a;"></div>
<div class="a" style="left:168px;top:21px;width:76px;height:18px;background:#13a68a;"></div>
<div class="a" style="left:245px;top:21px;width:72px;height:18px;background:#13a68a;"></div>
<div class="a" style="left:318px;top:21px;width:71px;height:18px;background:#13a68a;"></div>
<div class="a" style="left:390px;top:21px;width:67px;height:18px;background:#13a68a;"></div>
<div class="a" style="left:26px;top:40px;width:70px;height:19px;background:#b6d662;"></div>
<div class="a" style="left:97px;top:40px;width:70px;height:19px;background:#b8d9f8;"></div>
<div class="a" style="left:168px;top:40px;width:76px;height:19px;background:#b8d9f8;"></div>
<div class="a" style="left:245px;top:40px;width:72px;height:19px;background:#b8d9f8;"></div>
<div class="a" style="left:318px;top:40px;width:71px;height:19px;background:#b8d9f8;"></div>
<div class="a" style="left:390px;top:40px;width:67px;height:19px;background:#b8d9f8;"></div>
<div class="a" style="left:26px;top:60px;width:70px;height:19px;background:#b6d662;"></div>
<div class="a" style="left:97px;top:60px;width:70px;height:19px;background:#b8d9f8;"></div>
<div class="a" style="left:168px;top:60px;width:76px;height:19px;background:#b8d9f8;"></div>
<div class="a" style="left:245px;top:60px;width:72px;height:19px;background:#b8d9f8;"></div>
<div class="a" style="left:318px;top:60px;width:71px;height:19px;background:#b8d9f8;"></div>
<div class="a" style="left:390px;top:60px;width:67px;height:19px;background:#b8d9f8;"></div>
<div class="a" style="left:26px;top:80px;width:70px;height:19px;background:#b6d662;"></div>
<div class="a" style="left:97px;top:80px;width:70px;height:19px;background:#b8d9f8;"></div>
<div class="a" style="left:168px;top:80px;width:76px;height:19px;background:#b8d9f8;"></div>
<div class="a" style="left:245px;top:80px;width:72px;height:19px;background:#b8d9f8;"></div>
<div class="a" style="left:318px;top:80px;width:71px;height:19px;background:#b8d9f8;"></div>
<div class="a" style="left:390px;top:80px;width:67px;height:19px;background:#b8d9f8;"></div>
<div class="a" style="left:26px;top:100px;width:70px;height:19px;background:#b6d662;"></div>
<div class="a" style="left:97px;top:100px;width:70px;height:19px;background:#b8d9f8;"></div>
<div class="a" style="left:168px;top:100px;width:76px;height:19px;background:#b8d9f8;"></div>
<div class="a" style="left:245px;top:100px;width:72px;height:19px;background:#b8d9f8;"></div>
<div class="a" style="left:318px;top:100px;width:71px;height:19px;background:#b8d9f8;"></div>
<div class="a" style="left:390px;top:100px;width:67px;height:19px;background:#b8d9f8;"></div>
<div class="a" style="left:26px;top:120px;width:70px;height:19px;background:#b6d662;"></div>
<div class="a" style="left:97px;top:120px;width:70px;height:19px;background:#b8d9f8;"></div>
<div class="a" style="left:168px;top:120px;width:76px;height:19px;background:#b8d9f8;"></div>
<div class="a" style="left:245px;top:120px;width:72px;height:19px;background:#b8d9f8;"></div>
<div class="a" style="left:318px;top:120px;width:71px;height:19px;background:#b8d9f8;"></div>
<div class="a" style="left:390px;top:120px;width:67px;height:19px;background:#b8d9f8;"></div>
<div class="a" style="left:26px;top:140px;width:70px;height:19px;background:#b6d662;"></div>
<div class="a" style="left:97px;top:140px;width:70px;height:19px;background:#b8d9f8;"></div>
<div class="a" style="left:168px;top:140px;width:76px;height:19px;background:#b8d9f8;"></div>
<div class="a" style="left:245px;top:140px;width:72px;height:19px;background:#b8d9f8;"></div>
<div class="a" style="left:318px;top:140px;width:71px;height:19px;background:#b8d9f8;"></div>
<div class="a" style="left:390px;top:140px;width:67px;height:19px;background:#b8d9f8;"></div>
<div class="a" style="left:26px;top:160px;width:70px;height:19px;background:#b6d662;"></div>
<div class="a" style="left:97px;top:160px;width:70px;height:19px;background:#b8d9f8;"></div>
<div class="a" style="left:168px;top:160px;width:76px;height:19px;background:#b8d9f8;"></div>
<div class="a" style="left:245px;top:160px;width:72px;height:19px;background:#b8d9f8;"></div>
<div class="a" style="left:318px;top:160px;width:71px;height:19px;background:#b8d9f8;"></div>
<div class="a" style="left:390px;top:160px;width:67px;height:19px;background:#b8d9f8;"></div>
<div class="a" style="left:25px;top:39px;width:432px;height:1px;background:#1d3557;"></div>
<div class="a" style="left:25px;top:59px;width:432px;height:1px;background:#1d3557;"></div>
<div class="a" style="left:25px;top:79px;width:432px;height:1px;background:#1d3557;"></div>
<div class="a" style="left:25px;top:99px;width:432px;height:1px;background:#1d3557;"></div>
<div class="a" style="left:25px;top:119px;width:432px;height:1px;background:#1d3557;"></div>
<div class="a" style="left:25px;top:139px;width:432px;height:1px;background:#1d3557;"></div>
<div class="a" style="left:25px;top:159px;width:432px;height:1px;background:#1d3557;"></div>
<div class="a" style="left:25px;top:179px;width:432px;height:1px;background:#1d3557;"></div>
<div class="a" style="left:96px;top:20px;width:1px;height:160px;background:#1d3557;"></div>
<div class="a" style="left:167px;top:20px;width:1px;height:160px;background:#1d3557;"></div>
<div class="a" style="left:244px;top:20px;width:1px;height:160px;background:#1d3557;"></div>
<div class="a" style="left:317px;top:20px;width:1px;height:160px;background:#1d3557;"></div>
<div class="a" style="left:389px;top:20px;width:1px;height:160px;background:#1d3557;"></div>
<div class="a" style="left:457px;top:20px;width:1px;height:160px;background:#1d3557;"></div>
<div class="a" style="left:25px;top:20px;width:71px;height:1px;background:#1a2cff;"></div>
<div class="a" style="left:96px;top:20px;width:361px;height:1px;background:#f0509a;"></div>
<div class="a" style="left:97px;top:21px;width:360px;height:1px;background:#10b050;"></div>
<div class="a" style="left:457px;top:20px;width:326px;height:1px;background:#111;"></div>
<div class="a" style="left:458px;top:21px;width:325px;height:1px;background:#ffffff;"></div>
<div class="a" style="left:25px;top:178px;width:758px;height:3px;background:#111;"></div>
<div class="a" style="left:0px;top:0px;width:25px;height:19px;background:linear-gradient(#e7ebf0,#dfe4ea);"></div>
<div class="a" style="left:25px;top:0px;width:1px;height:20px;background:#b9bec5;"></div>
<svg class="a" style="left:12px;top:6px" width="12" height="12"><path d="M12 0V12H0z" fill="#c3cad3"/></svg>
<div class="a" style="left:25px;top:0px;width:71px;height:19px;background:linear-gradient(#fcc95a,#fdd968 45%,#fee67c);"></div>
<div class="a" style="left:96px;top:0px;width:1px;height:19px;background:#c98a3a;"></div>
<div class="t" style="left:25.8px;top:4.5px;width:71px;text-align:center;color:#1e261e;font-size:12px">A</div>
<div class="a" style="left:96px;top:0px;width:71px;height:19px;background:linear-gradient(#fcc95a,#fdd968 45%,#fee67c);"></div>
<div class="a" style="left:167px;top:0px;width:1px;height:19px;background:#c98a3a;"></div>
<div class="t" style="left:96.8px;top:4.5px;width:71px;text-align:center;color:#1e261e;font-size:12px">B</div>
<div class="a" style="left:167px;top:0px;width:77px;height:19px;background:linear-gradient(#fcc95a,#fdd968 45%,#fee67c);"></div>
<div class="a" style="left:244px;top:0px;width:1px;height:19px;background:#c98a3a;"></div>
<div class="t" style="left:167.8px;top:4.5px;width:77px;text-align:center;color:#1e261e;font-size:12px">C</div>
<div class="a" style="left:244px;top:0px;width:73px;height:19px;background:linear-gradient(#fcc95a,#fdd968 45%,#fee67c);"></div>
<div class="a" style="left:317px;top:0px;width:1px;height:19px;background:#c98a3a;"></div>
<div class="t" style="left:244.8px;top:4.5px;width:73px;text-align:center;color:#1e261e;font-size:12px">D</div>
<div class="a" style="left:317px;top:0px;width:72px;height:19px;background:linear-gradient(#fcc95a,#fdd968 45%,#fee67c);"></div>
<div class="a" style="left:389px;top:0px;width:1px;height:19px;background:#c98a3a;"></div>
<div class="t" style="left:317.8px;top:4.5px;width:72px;text-align:center;color:#1e261e;font-size:12px">E</div>
<div class="a" style="left:389px;top:0px;width:68px;height:19px;background:linear-gradient(#fcc95a,#fdd968 45%,#fee67c);"></div>
<div class="a" style="left:457px;top:0px;width:1px;height:19px;background:#c98a3a;"></div>
<div class="t" style="left:389.8px;top:4.5px;width:68px;text-align:center;color:#1e261e;font-size:12px">F</div>
<div class="a" style="left:457px;top:0px;width:64px;height:19px;background:linear-gradient(#fcc95a,#fdd968 45%,#fee67c);"></div>
<div class="a" style="left:521px;top:0px;width:1px;height:19px;background:#c98a3a;"></div>
<div class="t" style="left:457.8px;top:4.5px;width:64px;text-align:center;color:#1e261e;font-size:12px">G</div>
<div class="a" style="left:521px;top:0px;width:64px;height:19px;background:linear-gradient(#fcc95a,#fdd968 45%,#fee67c);"></div>
<div class="a" style="left:585px;top:0px;width:1px;height:19px;background:#c98a3a;"></div>
<div class="t" style="left:521.8px;top:4.5px;width:64px;text-align:center;color:#1e261e;font-size:12px">H</div>
<div class="a" style="left:585px;top:0px;width:64px;height:19px;background:linear-gradient(#fcc95a,#fdd968 45%,#fee67c);"></div>
<div class="a" style="left:649px;top:0px;width:1px;height:19px;background:#c98a3a;"></div>
<div class="t" style="left:585.8px;top:4.5px;width:64px;text-align:center;color:#1e261e;font-size:12px">I</div>
<div class="a" style="left:649px;top:0px;width:64px;height:19px;background:linear-gradient(#fcc95a,#fdd968 45%,#fee67c);"></div>
<div class="a" style="left:713px;top:0px;width:1px;height:19px;background:#c98a3a;"></div>
<div class="t" style="left:649.8px;top:4.5px;width:64px;text-align:center;color:#1e261e;font-size:12px">J</div>
<div class="a" style="left:713px;top:0px;width:64px;height:19px;background:linear-gradient(#fcc95a,#fdd968 45%,#fee67c);"></div>
<div class="a" style="left:777px;top:0px;width:1px;height:19px;background:#c98a3a;"></div>
<div class="t" style="left:713.8px;top:4.5px;width:64px;text-align:center;color:#1e261e;font-size:12px">K</div>
<div class="a" style="left:96px;top:0px;width:1px;height:19px;background:#c98a3a;"></div>
<div class="a" style="left:778px;top:0px;width:5px;height:19px;background:linear-gradient(#fcc95a,#fdd968 45%,#fee67c);"></div>
<div class="a" style="left:25px;top:19px;width:758px;height:1px;background:#d0903a;"></div>
<div class="a" style="left:0px;top:20px;width:25px;height:19px;background:linear-gradient(90deg,#a9aeb3,#b3b8bd 30%,#b0b5ba);"></div>
<div class="a" style="left:0px;top:39px;width:25px;height:1px;background:#6e7378;"></div>
<div class="a" style="left:24px;top:20px;width:1px;height:20px;background:#5b7080;"></div>
<div class="t" style="left:0;top:24px;width:25px;text-align:center;color:#1e2228;font-size:12.4px;line-height:15px">1</div>
<div class="a" style="left:0px;top:40px;width:25px;height:19px;background:linear-gradient(90deg,#a9aeb3,#b3b8bd 30%,#b0b5ba);"></div>
<div class="a" style="left:0px;top:59px;width:25px;height:1px;background:#6e7378;"></div>
<div class="a" style="left:24px;top:40px;width:1px;height:20px;background:#5b7080;"></div>
<div class="t" style="left:0;top:44px;width:25px;text-align:center;color:#1e2228;font-size:12.4px;line-height:15px">2</div>
<div class="a" style="left:0px;top:60px;width:25px;height:19px;background:linear-gradient(90deg,#a9aeb3,#b3b8bd 30%,#b0b5ba);"></div>
<div class="a" style="left:0px;top:79px;width:25px;height:1px;background:#6e7378;"></div>
<div class="a" style="left:24px;top:60px;width:1px;height:20px;background:#5b7080;"></div>
<div class="t" style="left:0;top:64px;width:25px;text-align:center;color:#1e2228;font-size:12.4px;line-height:15px">3</div>
<div class="a" style="left:0px;top:80px;width:25px;height:19px;background:linear-gradient(90deg,#a9aeb3,#b3b8bd 30%,#b0b5ba);"></div>
<div class="a" style="left:0px;top:99px;width:25px;height:1px;background:#6e7378;"></div>
<div class="a" style="left:24px;top:80px;width:1px;height:20px;background:#5b7080;"></div>
<div class="t" style="left:0;top:84px;width:25px;text-align:center;color:#1e2228;font-size:12.4px;line-height:15px">4</div>
<div class="a" style="left:0px;top:100px;width:25px;height:19px;background:linear-gradient(90deg,#a9aeb3,#b3b8bd 30%,#b0b5ba);"></div>
<div class="a" style="left:0px;top:119px;width:25px;height:1px;background:#6e7378;"></div>
<div class="a" style="left:24px;top:100px;width:1px;height:20px;background:#5b7080;"></div>
<div class="t" style="left:0;top:104px;width:25px;text-align:center;color:#1e2228;font-size:12.4px;line-height:15px">5</div>
<div class="a" style="left:0px;top:120px;width:25px;height:19px;background:linear-gradient(90deg,#a9aeb3,#b3b8bd 30%,#b0b5ba);"></div>
<div class="a" style="left:0px;top:139px;width:25px;height:1px;background:#6e7378;"></div>
<div class="a" style="left:24px;top:120px;width:1px;height:20px;background:#5b7080;"></div>
<div class="t" style="left:0;top:124px;width:25px;text-align:center;color:#1e2228;font-size:12.4px;line-height:15px">6</div>
<div class="a" style="left:0px;top:140px;width:25px;height:19px;background:linear-gradient(90deg,#a9aeb3,#b3b8bd 30%,#b0b5ba);"></div>
<div class="a" style="left:0px;top:159px;width:25px;height:1px;background:#6e7378;"></div>
<div class="a" style="left:24px;top:140px;width:1px;height:20px;background:#5b7080;"></div>
<div class="t" style="left:0;top:144px;width:25px;text-align:center;color:#1e2228;font-size:12.4px;line-height:15px">7</div>
<div class="a" style="left:0px;top:160px;width:25px;height:19px;background:linear-gradient(90deg,#a9aeb3,#b3b8bd 30%,#b0b5ba);"></div>
<div class="a" style="left:0px;top:179px;width:25px;height:1px;background:#6e7378;"></div>
<div class="a" style="left:24px;top:160px;width:1px;height:20px;background:#5b7080;"></div>
<div class="t" style="left:0;top:164px;width:25px;text-align:center;color:#1e2228;font-size:12.4px;line-height:15px">8</div>
<div class="a" style="left:0px;top:180px;width:25px;height:19px;background:#e3e8ef;"></div>
<div class="a" style="left:0px;top:199px;width:25px;height:1px;background:#b3b8bf;"></div>
<div class="a" style="left:25px;top:180px;width:1px;height:20px;background:#b1b6bd;"></div>
<div class="t" style="left:0;top:184px;width:25px;text-align:center;color:#222;font-size:12.4px;line-height:15px">9</div>
<div class="a" style="left:0px;top:200px;width:25px;height:19px;background:#e3e8ef;"></div>
<div class="a" style="left:0px;top:219px;width:25px;height:1px;background:#b3b8bf;"></div>
<div class="a" style="left:25px;top:200px;width:1px;height:20px;background:#b1b6bd;"></div>
<div class="t" style="left:0;top:204px;width:25px;text-align:center;color:#222;font-size:12.4px;line-height:15px">10</div>
<div class="a" style="left:0px;top:220px;width:25px;height:19px;background:#e3e8ef;"></div>
<div class="a" style="left:0px;top:239px;width:25px;height:1px;background:#b3b8bf;"></div>
<div class="a" style="left:25px;top:220px;width:1px;height:20px;background:#b1b6bd;"></div>
<div class="t" style="left:0;top:224px;width:25px;text-align:center;color:#222;font-size:12.4px;line-height:15px">11</div>
<div class="a" style="left:0px;top:240px;width:25px;height:19px;background:#e3e8ef;"></div>
<div class="a" style="left:0px;top:259px;width:25px;height:1px;background:#b3b8bf;"></div>
<div class="a" style="left:25px;top:240px;width:1px;height:20px;background:#b1b6bd;"></div>
<div class="t" style="left:0;top:244px;width:25px;text-align:center;color:#222;font-size:12.4px;line-height:15px">12</div>
<div class="a" style="left:0px;top:260px;width:25px;height:19px;background:#e3e8ef;"></div>
<div class="a" style="left:0px;top:279px;width:25px;height:1px;background:#b3b8bf;"></div>
<div class="a" style="left:25px;top:260px;width:1px;height:20px;background:#b1b6bd;"></div>
<div class="t" style="left:0;top:264px;width:25px;text-align:center;color:#222;font-size:12.4px;line-height:15px">13</div>
<div class="a" style="left:0px;top:280px;width:25px;height:19px;background:#e3e8ef;"></div>
<div class="a" style="left:0px;top:299px;width:25px;height:1px;background:#b3b8bf;"></div>
<div class="a" style="left:25px;top:280px;width:1px;height:20px;background:#b1b6bd;"></div>
<div class="t" style="left:0;top:284px;width:25px;text-align:center;color:#222;font-size:12.4px;line-height:15px">14</div>
<div class="a" style="left:0px;top:300px;width:25px;height:19px;background:#e3e8ef;"></div>
<div class="a" style="left:0px;top:319px;width:25px;height:1px;background:#b3b8bf;"></div>
<div class="a" style="left:25px;top:300px;width:1px;height:20px;background:#b1b6bd;"></div>
<div class="t" style="left:0;top:304px;width:25px;text-align:center;color:#222;font-size:12.4px;line-height:15px">15</div>
<div class="a" style="left:0px;top:320px;width:25px;height:19px;background:#e3e8ef;"></div>
<div class="a" style="left:0px;top:339px;width:25px;height:1px;background:#b3b8bf;"></div>
<div class="a" style="left:25px;top:320px;width:1px;height:20px;background:#b1b6bd;"></div>
<div class="t" style="left:0;top:324px;width:25px;text-align:center;color:#222;font-size:12.4px;line-height:15px">16</div>
<div class="a" style="left:0px;top:340px;width:25px;height:19px;background:#e3e8ef;"></div>
<div class="a" style="left:0px;top:359px;width:25px;height:1px;background:#b3b8bf;"></div>
<div class="a" style="left:25px;top:340px;width:1px;height:20px;background:#b1b6bd;"></div>
<div class="t" style="left:0;top:344px;width:25px;text-align:center;color:#222;font-size:12.4px;line-height:15px">17</div>
<div class="a" style="left:0px;top:360px;width:25px;height:19px;background:#e3e8ef;"></div>
<div class="a" style="left:0px;top:379px;width:25px;height:1px;background:#b3b8bf;"></div>
<div class="a" style="left:25px;top:360px;width:1px;height:20px;background:#b1b6bd;"></div>
<div class="t" style="left:0;top:364px;width:25px;text-align:center;color:#222;font-size:12.4px;line-height:15px">18</div>
<div class="a" style="left:0px;top:380px;width:25px;height:19px;background:#e3e8ef;"></div>
<div class="a" style="left:0px;top:399px;width:25px;height:1px;background:#b3b8bf;"></div>
<div class="a" style="left:25px;top:380px;width:1px;height:20px;background:#b1b6bd;"></div>
<div class="t" style="left:0;top:384px;width:25px;text-align:center;color:#222;font-size:12.4px;line-height:15px">19</div>
<div class="a" style="left:0px;top:400px;width:25px;height:19px;background:#e3e8ef;"></div>
<div class="a" style="left:0px;top:419px;width:25px;height:1px;background:#b3b8bf;"></div>
<div class="a" style="left:25px;top:400px;width:1px;height:20px;background:#b1b6bd;"></div>
<div class="t" style="left:0;top:404px;width:25px;text-align:center;color:#222;font-size:12.4px;line-height:15px">20</div>
<div class="a" style="left:0px;top:420px;width:25px;height:19px;background:#e3e8ef;"></div>
<div class="a" style="left:0px;top:439px;width:25px;height:1px;background:#b3b8bf;"></div>
<div class="a" style="left:25px;top:420px;width:1px;height:20px;background:#b1b6bd;"></div>
<div class="t" style="left:0;top:424px;width:25px;text-align:center;color:#222;font-size:12.4px;line-height:15px">21</div>
<div class="t cell" style="left:28px;top:23.5px;width:68px;letter-spacing:0.5px">Дата</div>
<div class="t cell" style="left:99px;top:23.5px;width:68px;letter-spacing:0.5px">Магазин 1</div>
<div class="t cell" style="left:170px;top:23.5px;width:74px;letter-spacing:0.5px">Магазин 2</div>
<div class="t cell" style="left:247px;top:23.5px;width:70px;letter-spacing:0.5px">Магазин 3</div>
<div class="t cell" style="left:320px;top:23.5px;width:69px;letter-spacing:0.5px">Магазин 4</div>
<div class="t cell" style="left:392px;top:23.5px;width:65px;letter-spacing:0.5px">Магазин 5</div>
<div class="t cell" style="left:30px;top:43.5px;width:66px;letter-spacing:0.25px">07.03.2017</div>
<div class="t cell" style="left:96px;top:43.5px;width:69.4px;text-align:right;letter-spacing:0.2px">15256,66</div>
<div class="t cell" style="left:167px;top:43.5px;width:75.4px;text-align:right;letter-spacing:0.2px">16589,45</div>
<div class="t cell" style="left:244px;top:43.5px;width:71.4px;text-align:right;letter-spacing:0.2px">23547,45</div>
<div class="t cell" style="left:317px;top:43.5px;width:70.4px;text-align:right;letter-spacing:0.2px">12456,96</div>
<div class="t cell" style="left:389px;top:43.5px;width:66.4px;text-align:right;letter-spacing:0.2px">34568,96</div>
<div class="t cell" style="left:30px;top:63.5px;width:66px;letter-spacing:0.25px">08.03.2017</div>
<div class="t cell" style="left:96px;top:63.5px;width:69.4px;text-align:right;letter-spacing:0.2px">17458,96</div>
<div class="t cell" style="left:167px;top:63.5px;width:75.4px;text-align:right;letter-spacing:0.2px">15248,56</div>
<div class="t cell" style="left:244px;top:63.5px;width:71.4px;text-align:right;letter-spacing:0.2px">24589,45</div>
<div class="t cell" style="left:317px;top:63.5px;width:70.4px;text-align:right;letter-spacing:0.2px">11478,52</div>
<div class="t cell" style="left:389px;top:63.5px;width:66.4px;text-align:right;letter-spacing:0.2px">33254,96</div>
<div class="t cell" style="left:30px;top:83.5px;width:66px;letter-spacing:0.25px">09.03.2017</div>
<div class="t cell" style="left:96px;top:83.5px;width:69.4px;text-align:right;letter-spacing:0.2px">14569,85</div>
<div class="t cell" style="left:167px;top:83.5px;width:75.4px;text-align:right;letter-spacing:0.2px">17589,78</div>
<div class="t cell" style="left:244px;top:83.5px;width:71.4px;text-align:right;letter-spacing:0.2px">24789,32</div>
<div class="t cell" style="left:317px;top:83.5px;width:70.4px;text-align:right;letter-spacing:0.2px">11548,96</div>
<div class="t cell" style="left:389px;top:83.5px;width:66.4px;text-align:right;letter-spacing:0.2px">35698,89</div>
<div class="t cell" style="left:30px;top:103.5px;width:66px;letter-spacing:0.25px">10.03.2017</div>
<div class="t cell" style="left:96px;top:103.5px;width:69.4px;text-align:right;letter-spacing:0.2px">13589,25</div>
<div class="t cell" style="left:167px;top:103.5px;width:75.4px;text-align:right;letter-spacing:0.2px">16478,96</div>
<div class="t cell" style="left:244px;top:103.5px;width:71.4px;text-align:right;letter-spacing:0.2px">23658,47</div>
<div class="t cell" style="left:317px;top:103.5px;width:70.4px;text-align:right;letter-spacing:0.2px">12589,25</div>
<div class="t cell" style="left:389px;top:103.5px;width:66.4px;text-align:right;letter-spacing:0.2px">33478,96</div>
<div class="t cell" style="left:30px;top:123.5px;width:66px;letter-spacing:0.25px">11.03.2017</div>
<div class="t cell" style="left:96px;top:123.5px;width:69.4px;text-align:right;letter-spacing:0.2px">14785,65</div>
<div class="t cell" style="left:167px;top:123.5px;width:75.4px;text-align:right;letter-spacing:0.2px">15879,63</div>
<div class="t cell" style="left:244px;top:123.5px;width:71.4px;text-align:right;letter-spacing:0.2px">25478,96</div>
<div class="t cell" style="left:317px;top:123.5px;width:70.4px;text-align:right;letter-spacing:0.2px">11896,58</div>
<div class="t cell" style="left:389px;top:123.5px;width:66.4px;text-align:right;letter-spacing:0.2px">36529,89</div>
<div class="t cell" style="left:30px;top:143.5px;width:66px;letter-spacing:0.25px">12.03.2017</div>
<div class="t cell" style="left:96px;top:143.5px;width:69.4px;text-align:right;letter-spacing:0.2px">16589,63</div>
<div class="t cell" style="left:167px;top:143.5px;width:75.4px;text-align:right;letter-spacing:0.2px">16987,45</div>
<div class="t cell" style="left:244px;top:143.5px;width:71.4px;text-align:right;letter-spacing:0.2px">24879,63</div>
<div class="t cell" style="left:317px;top:143.5px;width:70.4px;text-align:right;letter-spacing:0.2px">12458,96</div>
<div class="t cell" style="left:389px;top:143.5px;width:66.4px;text-align:right;letter-spacing:0.2px">35713,63</div>
<div class="t cell" style="left:30px;top:163.5px;width:66px;letter-spacing:0.25px">13.03.2017</div>
<div class="t cell" style="left:96px;top:163.5px;width:69.4px;text-align:right;letter-spacing:0.2px">16546,25</div>
<div class="t cell" style="left:167px;top:163.5px;width:75.4px;text-align:right;letter-spacing:0.2px">17456,89</div>
<div class="t cell" style="left:244px;top:163.5px;width:71.4px;text-align:right;letter-spacing:0.2px">23987,45</div>
<div class="t cell" style="left:317px;top:163.5px;width:70.4px;text-align:right;letter-spacing:0.2px">11987,57</div>
<div class="t cell" style="left:389px;top:163.5px;width:66.4px;text-align:right;letter-spacing:0.2px">34178,56</div>
</div>
<div class="a" style="left:822px;top:199px;width:16px;height:428px;background:linear-gradient(90deg,#e3e7ec,#eef1f4);border-left:1px solid #d6dce3"></div>
<div class="a" style="left:824px;top:200px;width:13px;height:7px;background:#fff;border:1px solid #7a6a7a"></div>
<div class="a" style="left:827px;top:203px;width:7px;height:1px;background:#7a6a7a"></div>
<svg class="a" style="left:825px;top:211px" width="10" height="8"><path d="M1 6.5L5 2.5 9 6.5z" fill="#333"/></svg>
<div class="a" style="left:823px;top:224px;width:14px;height:366px;background:linear-gradient(90deg,#f6f7f9,#e6eaee 50%,#dadfe5);border:1px solid #9aa5b1;border-radius:2px"></div>
<svg class="a" style="left:826px;top:403px" width="8" height="7"><path d="M0 0.5h8M0 2.5h8M0 4.5h8M0 6.5h8" stroke="#7d8894"/></svg>
<svg class="a" style="left:825px;top:613px" width="10" height="8"><path d="M1 1.5L5 5.5 9 1.5z" fill="#333"/></svg>
<!--GRID END-->
  <!-- sheet tabs bar -->
  <div class="a" style="left:38px;top:627px;width:801px;height:16px;background:linear-gradient(#e4e8ed,#dde2e8)"></div>
  <div class="a" style="left:38px;top:627px;width:64px;height:16px;background:linear-gradient(#eceff2,#dde1e6);border:1px solid #a3a9b1;border-left:none;border-bottom:none"></div>
  <svg class="a" style="left:43px;top:629px" width="58" height="11" viewBox="0 0 58 11">
    <path d="M2 1.5v8" stroke="#333" stroke-width="1.3"/><path d="M9 1.5v8L3.5 5.5z" fill="#333"/>
    <path d="M22 1.5v8L16.5 5.5z" fill="#333"/>
    <path d="M31 1.5v8L36.5 5.5z" fill="#333"/>
    <path d="M44 1.5v8L49.5 5.5z" fill="#333"/><path d="M51 1.5v8" stroke="#333" stroke-width="1.3"/>
  </svg>
  <svg class="a" style="left:100px;top:627px" width="410" height="16" viewBox="0 0 410 16">
    <rect x="0" y="0" width="410" height="16" fill="#d8dce1"/>
    <path d="M2 0H203L189.3 15H2z" fill="#e7eaee"/>
    <path d="M2 0H65.2L51 15H2z" fill="#fff"/>
    <path d="M65.2 0.5H410" stroke="#a9afb7"/>
    <path d="M51 15L65.2 0.5M104.6 15L116.9 0.5M159.2 15L170.8 0.5M189.3 15L203 0.5" stroke="#8f969e" fill="none"/>
    <path d="M104 15h3l-1.5-2zM158.6 15h3l-1.5-2zM188.7 15h3l-1.5-2zM50.4 15h3l-1.5-2z" fill="#b9bfc6"/>
  </svg>
  <div class="t" style="left:111px;top:629px;font-size:12px;line-height:14px;font-weight:bold;color:#222;letter-spacing:0.2px">Лист1</div>
  <div class="t" style="left:165px;top:629px;font-size:12.5px;line-height:14px;color:#333">Лист2</div>
  <div class="t" style="left:217.5px;top:629px;font-size:12.5px;line-height:14px;color:#333">Лист3</div>
  <svg class="a" style="left:272px;top:628px" width="15" height="14" viewBox="0 0 15 14">
    <path d="M3.5 4.5h10v8h-8l-2-2z" fill="#c5daf2" stroke="#3a5e8e"/>
    <path d="M4 1l1 2 2-1-1 2 2 1-2 .5 1 2-2-1-1 2-.5-2-2 1 1-2-2-1 2-.5z" fill="#f2c12e"/>
  </svg>
  <!-- horizontal scrollbar -->
  <div class="a" style="left:509px;top:628px;width:8px;height:14px;background:#fff;border:1px solid #8a8e9a"></div>
  <div class="a" style="left:512px;top:631px;width:1px;height:8px;background:#777"></div>
  <svg class="a" style="left:520px;top:629px" width="10" height="12"><path d="M7.5 1.5v9L2.5 6z" fill="#333"/></svg>
  <div class="a" style="left:534px;top:628px;width:239px;height:14px;background:linear-gradient(#f7f8fa,#e8ebef 50%,#dde1e6);border:1px solid #9aa5b1;border-radius:2px"></div>
  <svg class="a" style="left:648px;top:631px" width="8" height="8"><path d="M0.5 0v8M2.5 0v8M4.5 0v8M6.5 0v8" stroke="#7d8894"/></svg>
  <svg class="a" style="left:800px;top:629px" width="10" height="12"><path d="M2.5 1.5v9L7.5 6z" fill="#333"/></svg>
  <div class="a" style="left:814px;top:628px;width:8px;height:14px;background:#fff;border:1px solid #8a8e9a"></div>
  <div class="a" style="left:817px;top:631px;width:1px;height:8px;background:#777"></div>
  <!-- status bar -->
  <div class="a" style="left:38px;top:643px;width:801px;height:22px;background:linear-gradient(#eef0f3,#e1e4e8 50%,#d2d6db);border-top:1px solid #b9c0c8"></div>
  <div class="t" style="left:47px;top:647.5px;color:#333;font-size:11.5px">Готово</div>
  <div class="a" style="left:93px;top:646px;width:1px;height:17px;background:#b4bac2"></div>
  <svg class="a" style="left:103px;top:647px" width="16" height="15" viewBox="0 0 16 15">
    <rect x="1.5" y="2.5" width="14" height="12" fill="#fff" stroke="#3a5e9a"/>
    <rect x="2" y="3" width="13" height="3" fill="#5b8fd6"/>
    <path d="M4 8.5h3M9 8.5h4M4 11h3M9 11h4" stroke="#6b8cb8"/>
    <circle cx="3.5" cy="3.5" r="3" fill="#e8632a"/>
  </svg>
  <div class="a" style="left:128px;top:646px;width:1px;height:17px;background:#b4bac2"></div>
  <div class="t" style="left:254.5px;top:647.5px;color:#333;font-size:11px">Среднее: 24275,60476</div>
  <div class="t" style="left:383.5px;top:647.5px;color:#333;font-size:11px">Количество: 48</div>
  <div class="t" style="left:480.5px;top:647.5px;color:#333;font-size:11px">Сумма: 1019575,4</div>
  <div class="a" style="left:581px;top:646px;width:1px;height:17px;background:#b4bac2"></div>
  <div class="a" style="left:586px;top:645px;width:19px;height:19px;border:1px solid #e8a53a;border-radius:2px;background:linear-gradient(#fde9a0,#fbd96b)"></div>
  <svg class="a" style="left:588px;top:648px" width="15" height="12" viewBox="0 0 15 12"><rect x="0.5" y="0.5" width="14" height="11" fill="#fff" stroke="#333"/><path d="M0.5 4h14M0.5 8h14M5 0.5v11M10 0.5v11" stroke="#333"/></svg>
  <svg class="a" style="left:607px;top:648px" width="14" height="12" viewBox="0 0 14 12"><rect x="0.5" y="0.5" width="13" height="11" fill="#b9bfc6" stroke="#444"/><rect x="3" y="2" width="8" height="8" fill="#fff" stroke="#555"/><path d="M4.5 4h5M4.5 6h5M4.5 8h5" stroke="#777"/></svg>
  <svg class="a" style="left:626px;top:648px" width="14" height="12" viewBox="0 0 14 12"><rect x="0.5" y="0.5" width="13" height="11" fill="#b9bfc6" stroke="#444"/><rect x="2" y="1.5" width="4" height="5" fill="#fff"/><rect x="8" y="1.5" width="3" height="5" fill="#fff"/></svg>
  <div class="t" style="left:652px;top:648px;color:#333;font-size:11px;letter-spacing:0.1px">100%</div>
  <div class="a" style="left:687px;top:647px;width:15px;height:15px;border-radius:50%;background:linear-gradient(#fff,#dfe3e8);border:1px solid #6d747c"></div>
  <div class="a" style="left:690px;top:654px;width:9px;height:2px;background:#333"></div>
  <div class="a" style="left:702px;top:654px;width:101px;height:1px;background:#8c939c"></div>
  <div class="a" style="left:702px;top:655px;width:101px;height:1px;background:#fff"></div>
  <svg class="a" style="left:748px;top:647px" width="11" height="15" viewBox="0 0 11 15"><path d="M0.5 0.5h10v9l-5 5-5-5z" fill="#f4f6f8" stroke="#6d747c"/></svg>
  <div class="a" style="left:803px;top:647px;width:15px;height:15px;border-radius:50%;background:linear-gradient(#fff,#dfe3e8);border:1px solid #6d747c"></div>
  <div class="a" style="left:806px;top:654px;width:9px;height:2px;background:#333"></div>
  <div class="a" style="left:810px;top:650px;width:2px;height:9px;background:#333"></div>
  <svg class="a" style="left:826px;top:652px" width="11" height="11" viewBox="0 0 11 11"><path d="M9 1h1v1H9zM6 4h1v1H6zM9 4h1v1H9zM3 7h1v1H3zM6 7h1v1H6zM9 7h1v1H9z" fill="#9aa2ab"/></svg>
  <div class="a" style="left:38px;top:83px;width:801px;height:583px;border:1px solid #6f7782;border-radius:0 0 3px 3px"></div>
  <div class="a" style="left:38px;top:666px;width:801px;height:1px;background:#eef4fa"></div>
  <!-- mini toolbar -->
  <div class="a" style="left:236px;top:232px;width:248px;height:49px;background:#fff;border:1px solid #c6ccd4;border-radius:2px;box-shadow:2px 2px 3px rgba(0,0,0,0.18)"></div>
  <div class="a" style="left:238px;top:234px;width:60px;height:20px;background:#fff;border:1px solid #d3d9e0"></div>
  <div class="a" style="left:297px;top:234px;width:40px;height:20px;background:#fff;border:1px solid #d3d9e0"></div>
  <div class="t" style="left:240.5px;top:237px;color:#222;font-size:11.3px">Calibri</div>
  <div class="t" style="left:300.5px;top:237px;color:#222;font-size:11.3px">11</div>
  <div class="arr" style="left:287px;top:243px;border-top-color:#666"></div>
  <div class="arr" style="left:326px;top:243px;border-top-color:#666"></div>
  <div class="t" style="left:341px;top:235px;font:bold 16px/17px 'Liberation Serif';color:#222">A</div>
  <svg class="a" style="left:351px;top:234px" width="6" height="4"><path d="M0 4L3 0 6 4z" fill="#3a74c8"/></svg>
  <div class="t" style="left:365px;top:239px;font:bold 12px/13px 'Liberation Serif';color:#222">A</div>
  <svg class="a" style="left:372px;top:236px" width="6" height="4"><path d="M0 0L3 4 6 0z" fill="#3a74c8"/></svg>
  <svg class="a" style="left:384px;top:235px" width="18" height="17" viewBox="0 0 18 17">
    <rect x="0.5" y="0.5" width="16" height="8" fill="#3f73bf" stroke="#2b4f8a"/>
    <ellipse cx="8.5" cy="4.5" rx="4" ry="3" fill="#9cc0ea"/>
    <ellipse cx="13" cy="10.5" rx="3.5" ry="1.6" fill="#f2c14a" stroke="#b07a1a" stroke-width="0.6"/>
    <ellipse cx="13" cy="13" rx="3.5" ry="1.6" fill="#f2c14a" stroke="#b07a1a" stroke-width="0.6"/>
    <ellipse cx="13" cy="15.3" rx="3.5" ry="1.5" fill="#f2c14a" stroke="#b07a1a" stroke-width="0.6"/>
    <ellipse cx="5" cy="12" rx="3" ry="1.4" fill="#f2c14a" stroke="#b07a1a" stroke-width="0.6"/>
  </svg>
  <div class="arr" style="left:406px;top:243px;border-top-color:#666"></div>
  <div class="t" style="left:420px;top:237px;font-size:14px;line-height:15px;color:#111">%</div>
  <div class="t" style="left:442px;top:238px;font-size:12px;line-height:14px;color:#111;transform:scaleX(0.75);transform-origin:left">000</div>
  <svg class="a" style="left:462px;top:236px" width="18" height="17" viewBox="0 0 18 17">
    <rect x="0.5" y="0.5" width="16" height="15" fill="#d7e4f4" stroke="#4d6a94"/>
    <rect x="1" y="5" width="15" height="6" fill="#fff"/>
    <path d="M1 3h15M1 13h15M8.5 1v3M8.5 12v3" stroke="#8aa6cc"/>
    <text x="8.5" y="10.5" font-family="Liberation Serif" font-weight="bold" font-size="8" text-anchor="middle" fill="#222">a</text>
    <path d="M2 8h3M12 8h3" stroke="#333"/>
  </svg>
  <div class="t" style="left:241px;top:261px;font:bold 14px/16px 'Liberation Serif';color:#1a1a1a">Ж</div>
  <div class="t" style="left:265px;top:261px;font:bold italic 14px/16px 'Liberation Serif';color:#1a1a1a">К</div>
  <svg class="a" style="left:285px;top:262px" width="16" height="13" viewBox="0 0 16 13"><path d="M1 1.5h14M1 7.5h14M1 11.5h14" stroke="#111"/><path d="M3 4.5h10M3 9.5h10" stroke="#111"/><path d="M1 2.5h14M3 5.5h10M1 8.5h14M3 10.5h10" stroke="#c8cacd"/></svg>
  <svg class="a" style="left:305px;top:258px" width="18" height="17" viewBox="0 0 18 17">
    <path d="M2.5 6.5L7 2l5.5 5.5L8 12z" fill="#fff" stroke="#2a3340" stroke-width="1"/>
    <path d="M3 6.5h9" stroke="#9fb8d8" stroke-width="1"/>
    <path d="M6 1.5c1-1.5 3-1 3 1.5v3" stroke="#2a3340" fill="none" stroke-width="0.9"/>
    <path d="M12.5 7.5c1.8.3 3 1.5 3 3.5 0 1-.6 1.5-1.2 1.5-.7 0-1.1-.6-1.1-1.5z" fill="#3a7ad0" stroke="#24509a" stroke-width="0.5"/>
    <rect x="1" y="13" width="16" height="4" fill="#f0c000"/>
  </svg>
  <div class="arr" style="left:327px;top:268px;border-top-color:#666"></div>
  <div class="t" style="left:340px;top:257px;font:bold 16px/16px 'Liberation Serif';color:#2a4e8a">A</div>
  <div class="a" style="left:340px;top:272px;width:16px;height:4px;background:#e8111a"></div>
  <div class="arr" style="left:361px;top:268px;border-top-color:#666"></div>
  <svg class="a" style="left:376px;top:261px" width="15" height="15" viewBox="0 0 15 15">
    <path d="M1.5 1v12M7.5 1v12M13.5 1v12M1 1.5h13M1 7.5h13" stroke="#666" stroke-dasharray="1 1" fill="none"/>
    <path d="M1 13.5h13" stroke="#111" stroke-width="1.2"/>
  </svg>
  <div class="arr" style="left:395px;top:268px;border-top-color:#666"></div>
  <svg class="a" style="left:407px;top:260px" width="18" height="18" viewBox="0 0 18 18">
    <path d="M1 5h5M3 3L1 5l2 2" stroke="#2f6cc0" stroke-width="1.3" fill="none"/>
    <text x="7" y="8" font-family="Liberation Sans" font-weight="bold" font-size="8" fill="#111">,0</text>
    <text x="3" y="16" font-family="Liberation Sans" font-weight="bold" font-size="8" fill="#111">,00</text>
  </svg>
  <svg class="a" style="left:428px;top:260px" width="18" height="18" viewBox="0 0 18 18">
    <text x="3" y="8" font-family="Liberation Sans" font-weight="bold" font-size="8" fill="#111">,00</text>
    <path d="M1 13h5M4 11l2 2-2 2" stroke="#2f6cc0" stroke-width="1.3" fill="none"/>
    <text x="7" y="16" font-family="Liberation Sans" font-weight="bold" font-size="8" fill="#111">,0</text>
  </svg>
  <svg class="a" style="left:452px;top:260px" width="18" height="16" viewBox="0 0 18 16">
    <path d="M12 5.5l3.8-4.3c.6-.6 1.6.2 1.1.9L13.4 7z" fill="#3a6fc0" stroke="#1f4a8a" stroke-width="0.6"/>
    <path d="M9.5 4.5l4.5 4-1.5 1.5-4.5-4z" fill="#c9ced6" stroke="#6b737e" stroke-width="0.6"/>
    <path d="M8 6l4.5 4-4 4.5c-1.8 1-4.5.6-7-1.8z" fill="#f4cf7c" stroke="#a87a2c" stroke-width="0.6"/>
    <path d="M4 12.5l5.5-4.3M6 14l5-4.5" stroke="#e8a43c" stroke-width="1.2"/>
  </svg>

  <!-- context menu -->
  <div class="a" style="left:235px;top:297px;width:183px;height:279px;background:#fff;border:1px solid #c4cad2;border-radius:2px;box-shadow:2px 2px 3px rgba(0,0,0,0.2)"></div>
  <div class="a" style="left:261px;top:299px;width:1px;height:275px;background:#e2e4e7"></div>
  <div class="a" style="left:262px;top:343px;width:154px;height:18px;background:#eceef2"></div>
  <div class="t mi" style="top:304px">В<u>ы</u>резать</div>
  <div class="t mi" style="top:325.5px"><u>К</u>опировать</div>
  <div class="t mi" style="top:346.5px;font-weight:bold;font-size:10.9px;letter-spacing:0;word-spacing:0">Параметры вставки:</div>
  <div class="t mi" style="top:395.5px"><u>С</u>пециальная вставка...</div>
  <div class="a" style="left:270px;top:414px;width:146px;height:1px;border-top:1px dashed #c5c9ce"></div>
  <div class="t mi" style="top:421.5px"><u>В</u>ставить</div>
  <div class="t mi" style="top:443.5px"><u>У</u>далить</div>
  <div class="t mi" style="top:465.5px">Очистить содер<u>ж</u>имое</div>
  <div class="a" style="left:270px;top:485px;width:146px;height:1px;border-top:1px dashed #c5c9ce"></div>
  <div class="t mi" style="top:491.5px">Формат <u>я</u>чеек...</div>
  <div class="t mi" style="top:513.5px">В<u>ы</u>сота строки...</div>
  <div class="t mi" style="top:535.5px">Скрыт<u>ь</u></div>
  <div class="t mi" style="top:557px">Показа<u>т</u>ь</div>
  <svg class="a" style="left:242px;top:302px" width="12" height="16" viewBox="0 0 12 16">
    <path d="M2.3 0.5L6.2 9M9.7 0.5L5.8 9" stroke="#6b7480" stroke-width="1.6"/>
    <ellipse cx="3.2" cy="12.3" rx="2.4" ry="2.7" fill="#fff" stroke="#2257b8" stroke-width="1.7"/>
    <ellipse cx="8.8" cy="12.3" rx="2.4" ry="2.7" fill="#fff" stroke="#2257b8" stroke-width="1.7"/>
  </svg>
  <svg class="a" style="left:241px;top:325px" width="16" height="14" viewBox="0 0 16 14">
    <path d="M0.5 0.5h5l2 2v7h-7z" fill="#fff" stroke="#7d8a9c"/>
    <path d="M1.5 3.5h3M1.5 5.5h4.5M1.5 7.5h4.5" stroke="#3d8fe0"/>
    <path d="M6.5 3.5h5l3 3v7h-8z" fill="#fff" stroke="#2b4f9a"/>
    <path d="M11.5 3.5v3h3" fill="#dce8f8" stroke="#2b4f9a"/>
    <path d="M7.5 7.5h6M7.5 9.5h6M7.5 11.5h6" stroke="#3d8fe0"/>
  </svg>
  <svg class="a" style="left:241px;top:346px" width="17" height="16" viewBox="0 0 17 16">
    <rect x="0.5" y="2.5" width="11" height="12" rx="1" fill="#f0b84a" stroke="#9a6a20"/>
    <rect x="3.5" y="0.5" width="5" height="3" fill="#ddd" stroke="#666"/>
    <path d="M6.5 6.5h6l3 3v6h-9z" fill="#fff" stroke="#555"/>
    <path d="M8 10h6M8 12h6M8 14h6" stroke="#999"/>
  </svg>
  <div class="a" style="left:266px;top:364px;width:23px;height:24px;border:1px solid #c9a35a;border-radius:2px;background:linear-gradient(#fbf0cf,#f4dca0)"></div>
  <div class="a" style="left:274px;top:362px;width:7px;height:4px;border:1px solid #888;background:#eee;border-radius:1px"></div>
  <div class="t" style="left:266px;top:368.5px;width:23px;text-align:center;font:bold 17px/19px 'Liberation Sans';color:#111">A</div>
  <svg class="a" style="left:240px;top:490px" width="18" height="16" viewBox="0 0 18 16">
    <rect x="0.5" y="4.5" width="13" height="11" fill="#fff" stroke="#4a6a9a"/>
    <rect x="1" y="5" width="12" height="2.5" fill="#6b9ad8"/>
    <path d="M2.5 9.5h3M7 9.5h5M2.5 12h3M7 12h5" stroke="#7d9cc4"/>
    <path d="M6 6c2-4 6-6 11-5l-3 5z" fill="#f0c050" stroke="#a07020" stroke-width="0.7"/>
    <path d="M14 1l3 0 0 4" fill="#5a9a3a"/>
  </svg>

  <!-- annotation 1 -->
  <div class="a" style="left:39px;top:211px;width:31px;height:180px;border:5.3px solid #ff0000;border-radius:15px"></div>
  <div class="a ball" style="left:38.5px;top:378.5px;width:46px;height:46px"></div>
  <div class="t num" style="left:39px;top:389.5px;width:46px">1</div>
  <!-- annotation 2 -->
  <div class="a" style="left:251px;top:504px;width:150px;height:31px;border:5px solid #ff0000;border-radius:14px;box-shadow:1px 3px 4px rgba(0,0,0,0.4), inset 1px 3px 4px rgba(0,0,0,0.3)"></div>
  <div class="a ball" style="left:377px;top:498px;width:51px;height:52px"></div>
  <div class="t num" style="left:377px;top:510.5px;width:51px">2</div>
</div>
</body></html>
